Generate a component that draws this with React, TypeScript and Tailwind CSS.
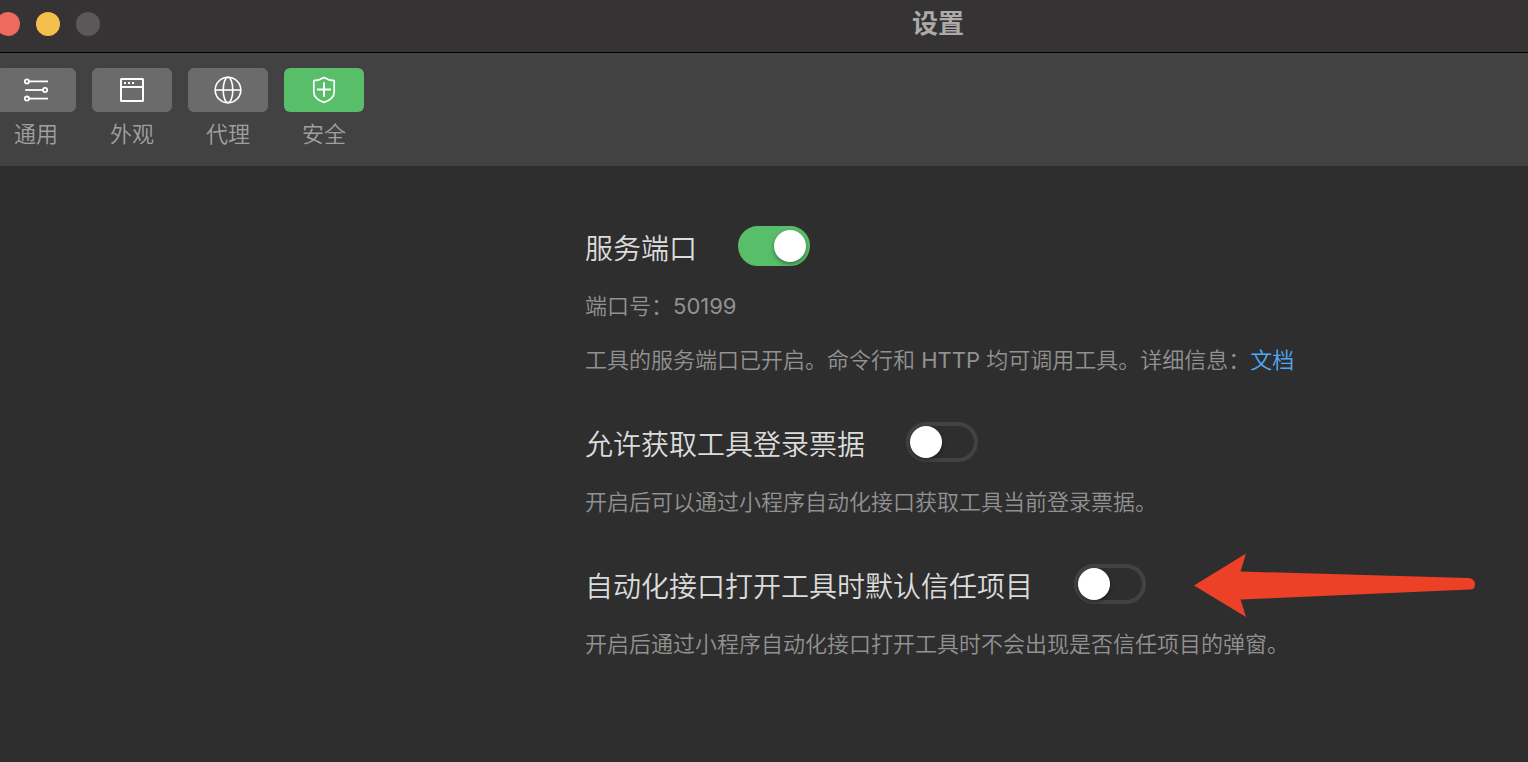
import React from 'react';
import { clsx } from 'clsx';

const SlidersIcon = () => (
  <svg width="24" height="24" viewBox="0 0 24 24" fill="none" stroke="currentColor" strokeWidth="1.8" aria-hidden="true">
    <circle cx="2.9" cy="3.4" r="2.1" />
    <path d="M5 3.4h19" />
    <circle cx="21.1" cy="12" r="2.1" />
    <path d="M1.2 12H19" />
    <circle cx="2.9" cy="20.6" r="2.1" />
    <path d="M5 20.6h19" />
  </svg>
);

const WindowIcon = () => (
  <svg width="24" height="24" viewBox="0 0 24 24" fill="none" stroke="currentColor" strokeWidth="2" aria-hidden="true">
    <rect x="1" y="1" width="22" height="22" rx="0.5" />
    <path d="M1 9h22" />
    <path d="M4 5h2M8 5h2M12 5h2" />
  </svg>
);

const GlobeIcon = () => (
  <svg width="28" height="28" viewBox="0 0 28 28" fill="none" stroke="currentColor" strokeWidth="1.6" aria-hidden="true">
    <circle cx="14" cy="14" r="12.8" />
    <ellipse cx="14" cy="14" rx="4.8" ry="12.8" />
    <path d="M1.2 14h25.6" />
  </svg>
);

const ShieldIcon = () => (
  <svg width="24" height="28" viewBox="0 0 24 28" fill="none" stroke="currentColor" strokeWidth="1.7" aria-hidden="true">
    <path d="M12 1.5C8.8 3.5 5.2 4.5 1.8 4.7V16C1.8 21 6.5 24.5 12 26.4C17.5 24.5 22.2 21 22.2 16V4.7C18.8 4.5 15.2 3.5 12 1.5Z" />
    <path d="M12 6.2v14.6M5 13.5h14" strokeWidth="2" />
  </svg>
);

const Arrow = () => (
  <svg className="-my-4 ml-12 shrink-0" width="281" height="66" viewBox="0 0 281 66" aria-hidden="true">
    <path
      fill="#ec4127"
      d="M0 34.5L52 2.5L46.5 20.5L274 27Q281 27.5 281 33.5Q281 38.5 276 38.5L46.5 48.5L52 66Z"
    />
  </svg>
);

const tabs = [
  { id: 'general', label: '通用', icon: SlidersIcon },
  { id: 'appearance', label: '外观', icon: WindowIcon },
  { id: 'proxy', label: '代理', icon: GlobeIcon },
  { id: 'security', label: '安全', icon: ShieldIcon },
];

type SettingProps = {
  id: string;
  title: string;
  defaultOn?: boolean;
  marked?: boolean;
  children: React.ReactNode;
};

const Setting = ({ id, title, defaultOn = false, marked = false, children }: SettingProps) => {
  const [on, setOn] = React.useState(defaultOn);

  return (
    <section>
      <div className="flex h-10 items-center">
        <label htmlFor={id} className="pt-1.5 text-[28px] leading-10 whitespace-nowrap text-[#dcdcdc]">
          {title}
        </label>
        <input
          id={id}
          type="checkbox"
          role="switch"
          checked={on}
          onChange={e => setOn(e.target.checked)}
          className="ml-[41px] flex h-10 w-[72px] shrink-0 cursor-pointer appearance-none items-center rounded-full border-4 border-[#424242] before:size-8 before:rounded-full before:bg-white before:shadow-[0_2px_4px_rgba(0,0,0,0.4)] checked:justify-end checked:border-[#58be6a] checked:bg-[#58be6a]"
        />
        {marked && <Arrow />}
      </div>
      <div className="mt-6 space-y-[22px] text-[22px] leading-8 text-[#929292]">{children}</div>
    </section>
  );
};

const App = () => {
  const [active, setActive] = React.useState('security');

  return (
    <div
      lang="zh-CN"
      className="min-h-screen overflow-hidden bg-[#2e2e2e] font-['Inter','Noto_Sans_CJK_SC',sans-serif] font-[350]"
    >
      <header className="flex h-[52px] items-start bg-[#363334]">
        <div className="-ml-1 flex shrink-0 gap-4 pt-3">
          <button type="button" aria-label="关闭" className="size-6 rounded-full bg-[#ed6a5e]" />
          <button type="button" aria-label="最小化" className="size-6 rounded-full bg-[#f5bf4f]" />
          <button type="button" aria-label="缩放" disabled className="size-6 rounded-full bg-[#5a5859]" />
        </div>
        <h1 className="flex-1 pt-1 pl-[248px] text-center text-[26px] leading-10 font-semibold text-[#acabab]">设置</h1>
      </header>

      <nav className="-ml-1 flex h-[114px] gap-4 border-t border-black bg-[#424242] pt-[15px]">
        {tabs.map(({ id, label, icon: Icon }) => (
          <button key={id} type="button" onClick={() => setActive(id)} className="flex w-20 flex-col items-center">
            <span
              className={clsx(
                'flex h-11 w-full items-center justify-center rounded-md text-white',
                active === id ? 'bg-[#58be6a]' : 'bg-[#6b6b6b]'
              )}
            >
              <Icon />
            </span>
            <span className="mt-1.5 text-[22px] leading-8 text-[#a0a0a0]">{label}</span>
          </button>
        ))}
      </nav>

      <main className="space-y-[46px] pt-[60px] pb-24 pl-[585px]">
        <Setting id="service-port" title="服务端口" defaultOn>
          <p>
            端口号：<span className="font-normal">50199</span>
          </p>
          <p className="whitespace-nowrap">
            工具的服务端口已开启。命令行和 <span className="font-normal">HTTP</span> 均可调用工具。详细信息：
            <a href="#docs" className="text-[#4ea9f5]">文档</a>
          </p>
        </Setting>
        <Setting id="login-ticket" title="允许获取工具登录票据">
          <p>开启后可以通过小程序自动化接口获取工具当前登录票据。</p>
        </Setting>
        <Setting id="trust-project" title="自动化接口打开工具时默认信任项目" marked>
          <p>开启后通过小程序自动化接口打开工具时不会出现是否信任项目的弹窗。</p>
        </Setting>
      </main>
    </div>
  );
};

export default App;
